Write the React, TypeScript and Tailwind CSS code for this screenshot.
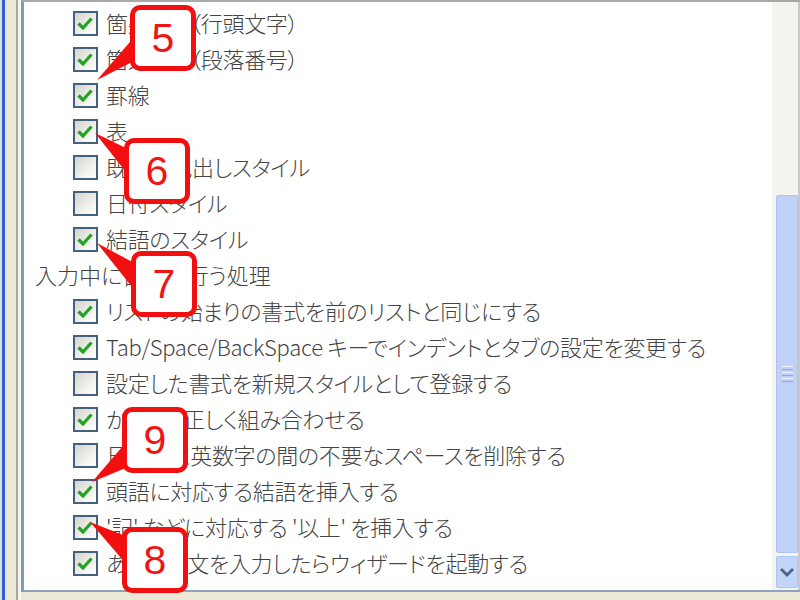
import React from "react";

type Row = { label: string; checked?: boolean; heading?: boolean };

const ROWS: Row[] = [
  { label: "箇条書き（行頭文字）", checked: true },
  { label: "箇条書き（段落番号）", checked: true },
  { label: "罫線", checked: true },
  { label: "表", checked: true },
  { label: "既定の見出しスタイル" },
  { label: "日付スタイル" },
  { label: "結語のスタイル", checked: true },
  { label: "入力中に自動で行う処理", heading: true },
  { label: "リストの始まりの書式を前のリストと同じにする", checked: true },
  { label: "Tab/Space/BackSpace キーでインデントとタブの設定を変更する", checked: true },
  { label: "設定した書式を新規スタイルとして登録する" },
  { label: "かっこを正しく組み合わせる", checked: true },
  { label: "日本語と英数字の間の不要なスペースを削除する" },
  { label: "頭語に対応する結語を挿入する", checked: true },
  { label: "'記' などに対応する '以上' を挿入する", checked: true },
  { label: "あいさつ文を入力したらウィザードを起動する", checked: true },
];

// callout badges: box position + tail triangle pointing at a checkbox
const CALLOUTS = [
  { n: 5, box: "left-[130px] top-[5px]", tail: "97,80 136,35 136,60" },
  { n: 6, box: "left-[124px] top-[138px]", tail: "95,133 130,150 130,177" },
  { n: 7, box: "left-[131px] top-[251px]", tail: "97,243 136,264 136,292" },
  { n: 9, box: "left-[122px] top-[407px]", tail: "92,482 128,440 128,467" },
  { n: 8, box: "left-[122px] top-[527px]", tail: "90,522 128,537 128,566" },
];

function Checkbox({ checked }: { checked?: boolean }) {
  return (
    <span className="flex h-[25px] w-[25px] shrink-0 items-center justify-center border-2 border-[#45607f] bg-linear-to-br from-[#d4d4cc] via-[#ecece6] to-white">
      {checked && (
        <svg width="21" height="21" viewBox="0 0 21 21">
          <path d="M3.5 10.5 L8 15 L16.5 5.5" stroke="#22a222" strokeWidth="3.2" fill="none" strokeLinejoin="miter" />
        </svg>
      )}
    </span>
  );
}

function ScrollBar() {
  return (
    <div className="flex w-[28px] shrink-0 flex-col border-r-2 border-[#c9c9c4] bg-[#f4f3ee] pl-[4px]">
      <div className="mt-[193px] flex h-[358px] w-[22px] items-center justify-center rounded-[2px] border border-[#aec3f2] bg-[#bfd1f9]">
        <div className="flex w-[11px] flex-col gap-[2px]">
          <span className="h-[1px] bg-[#eef3ff]" />
          <span className="h-[1px] bg-[#8fa9e0]" />
          <span className="h-[1px] bg-[#eef3ff]" />
          <span className="h-[1px] bg-[#8fa9e0]" />
          <span className="h-[1px] bg-[#eef3ff]" />
          <span className="h-[1px] bg-[#8fa9e0]" />
        </div>
      </div>
      <div className="mt-[3px] flex h-[32px] w-[22px] items-center justify-center rounded-[2px] border border-[#aec3f2] bg-[#c3d4fb]">
        <svg width="16" height="10" viewBox="0 0 16 10">
          <path d="M2 2 L8 8 L14 2" stroke="#4d6185" strokeWidth="2.8" fill="none" />
        </svg>
      </div>
    </div>
  );
}

export default function App() {
  return (
    <div className="relative flex h-[600px] w-[800px] overflow-hidden bg-[#ece9d8] font-['Noto_Sans_CJK_JP',sans-serif] font-light text-[#444444]">
      <div className="w-[2px] bg-[#dedede]" />
      <div className="w-[3px] bg-[#2e63d6]" />
      <div className="w-[11px]" />
      <div className="w-[2px] bg-[#aca899]" />
      <div className="w-[3px] bg-[#f6f5f0]" />

      <div className="flex h-[592px] flex-1 border-t-2 border-b-2 border-l-[3px] border-t-[#a9a9a9] border-b-[#8ea3bd] border-l-[#7f9db9] bg-white">
        <div className="flex-1 pt-[3px]">
          {ROWS.map((r, i) =>
            r.heading ? (
              <div key={i} className="flex h-[36px] items-center pl-[11px]">
                <span className="mb-[3px] whitespace-nowrap text-[22px] leading-none [font-feature-settings:'palt']">{r.label}</span>
              </div>
            ) : (
              <div key={i} className="flex h-[36px] items-center gap-[8px] pl-[49px]">
                <Checkbox checked={r.checked} />
                <span className="mb-[3px] whitespace-nowrap text-[22px] leading-none tracking-[-0.3px] [font-feature-settings:'palt']">{r.label}</span>
              </div>
            )
          )}
        </div>
        <ScrollBar />
      </div>

      <svg className="pointer-events-none absolute left-0 top-0" width="800" height="600">
        {CALLOUTS.map((c) => (
          <polygon key={c.n} points={c.tail} fill="#f20f0f" />
        ))}
      </svg>
      {CALLOUTS.map((c) => (
        <div
          key={c.n}
          className={`absolute flex h-[66px] w-[66px] items-center justify-center rounded-[10px] border-[5px] border-[#f20f0f] bg-white font-['Liberation_Sans',Arial,sans-serif] text-[41px] font-normal leading-none text-[#f01515] ${c.box}`}
        >
          {c.n}
        </div>
      ))}
    </div>
  );
}
